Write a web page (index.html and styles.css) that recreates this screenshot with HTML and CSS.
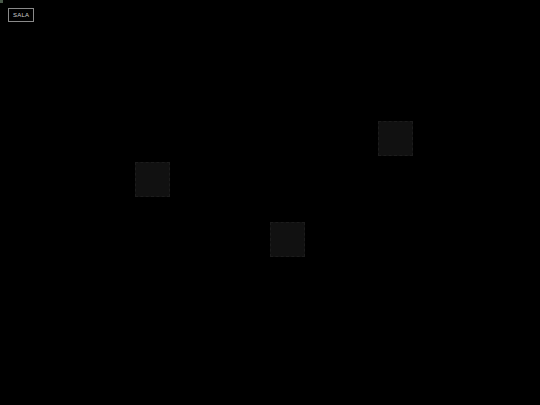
FILE: index.html
```html
<!DOCTYPE html>
<html>
<head>
<meta charset="utf-8">
<link rel="stylesheet" href="styles.css">
</head>
<body>
<div class="dot"></div>
<div class="bar">
  <button class="room-btn">SALA</button>
</div>
<div class="canvas">
  <div class="tile" style="left:135px;top:162px"></div>
  <div class="tile" style="left:378px;top:121px"></div>
  <div class="tile" style="left:270px;top:222px"></div>
</div>
</body>
</html>
```
FILE: styles.css
```css
html, body {
  margin: 0;
  padding: 0;
  background: #000;
  width: 540px;
  height: 405px;
  overflow: hidden;
  font-family: "Liberation Sans", Arial, sans-serif;
}
.dot {
  position: absolute;
  left: 0;
  top: 0;
  width: 3px;
  height: 3px;
  background: #4a5a4a;
}
.bar {
  padding: 8px;
}
.room-btn {
  display: block;
  background: #000;
  color: #cfcfcf;
  border: 1px solid #8a8a8a;
  font-family: "Liberation Sans", Arial, sans-serif;
  font-size: 6px;
  letter-spacing: 0.2px;
  padding: 3px 4px;
  height: 14px;
  width: 26px;
  line-height: 6px;
  margin: 0;
}
.canvas {
  position: absolute;
  inset: 0;
  pointer-events: none;
}
.tile {
  position: absolute;
  width: 33px;
  height: 33px;
  background: #111;
  border: 1px dashed #1c1c1c;
}
```
